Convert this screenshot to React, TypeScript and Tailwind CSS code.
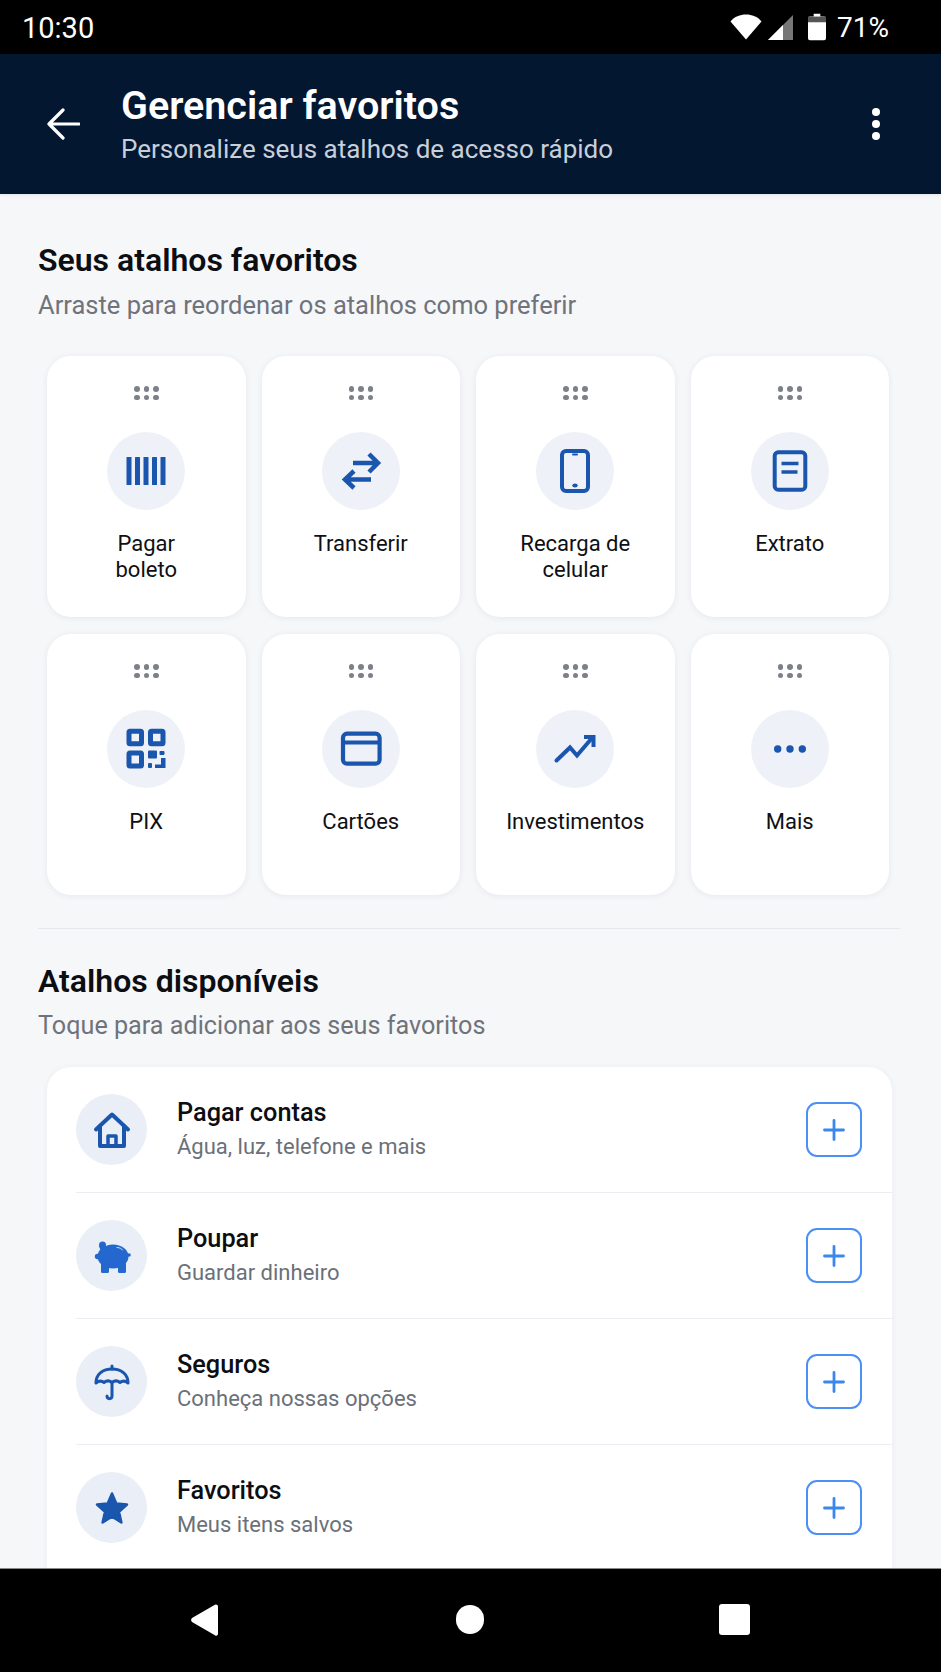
import type { ReactNode } from "react";

const Glyph = ({ children }: { children: ReactNode }) => (
  <svg viewBox="0 0 48 48" className="h-12 w-12 text-[#1a56ad]" fill="none" stroke="currentColor" strokeWidth="4" strokeLinecap="round" strokeLinejoin="round">
    {children}
  </svg>
);

const shortcuts = [
  {
    label: "Pagar\nboleto",
    icon: (
      <g fill="currentColor" stroke="none">
        <rect x="4.500" y="10" width="5" height="28" rx="0.500" />
        <rect x="13" y="10" width="5" height="28" rx="0.500" />
        <rect x="21.500" y="10" width="5" height="28" rx="0.500" />
        <rect x="30" y="10" width="5" height="28" rx="0.500" />
        <rect x="38.500" y="10" width="5" height="28" rx="0.500" />
      </g>
    ),
  },
  {
    label: "Transferir",
    icon: (
      <g strokeWidth="4.500" strokeLinecap="butt" strokeLinejoin="miter">
        <path d="M16 16h24M32 7l9 9-9 9" />
        <path d="M34 32.500H9M17 24l-9 8.500 9 8.500" />
      </g>
    ),
  },
  {
    label: "Recarga de\ncelular",
    icon: (
      <>
        <rect x="11" y="4" width="26" height="40" rx="4" />
        <path d="M22 7.500h4" strokeWidth="2" />
        <ellipse cx="24" cy="38.500" rx="2.700" ry="2" fill="currentColor" stroke="none" />
      </>
    ),
  },
  {
    label: "Extrato",
    icon: (
      <>
        <rect x="8.700" y="5.300" width="30.600" height="37.400" rx="3.500" />
        <path d="M15.500 16.500h17M15.500 25h16" strokeLinecap="butt" strokeWidth="3.500" />
      </>
    ),
  },
  {
    label: "PIX",
    icon: (
      <>
        <rect x="7" y="6.200" width="12.500" height="12.500" rx="1" strokeWidth="5" />
        <rect x="28.500" y="6.200" width="12.500" height="12.500" rx="1" strokeWidth="5" />
        <rect x="7" y="28" width="12.500" height="13" rx="1" strokeWidth="5" />
        <g fill="currentColor" stroke="none">
          <rect x="11.700" y="10.800" width="3" height="3" fill="#eef1f7" />
          <rect x="33.200" y="10.800" width="3" height="3" fill="#eef1f7" />
          <rect x="26" y="25.500" width="9" height="8" rx="1" />
          <rect x="37.500" y="26" width="5" height="4" rx="1" />
          <rect x="26" y="38" width="4" height="5" rx="1" />
          <path d="M39 33h4.500v10H33v-3.500h6z" />
        </g>
      </>
    ),
  },
  {
    label: "Cartões",
    icon: (
      <>
        <rect x="6" y="8.700" width="36.600" height="30" rx="4" strokeWidth="4.200" />
        <path d="M6 17.500h36" strokeLinecap="butt" strokeWidth="4.200" />
      </>
    ),
  },
  {
    label: "Investimentos",
    icon: (
      <g strokeWidth="4" strokeLinecap="round" strokeLinejoin="miter">
        <path d="M5.500 35.500 19 22.500l7 8 15-17.500" />
        <path d="M33 12h9.500v10" strokeLinecap="butt" />
      </g>
    ),
  },
  {
    label: "Mais",
    icon: (
      <g fill="currentColor" stroke="none">
        <circle cx="11.700" cy="24" r="3.700" />
        <circle cx="24" cy="24" r="3.700" />
        <circle cx="36.300" cy="24" r="3.700" />
      </g>
    ),
  },
];

const available = [
  {
    title: "Pagar contas",
    desc: "Água, luz, telefone e mais",
    icon: (
      <>
        <path d="M8 23.500 24 8.500l16 15" />
        <path d="M12 20v20h24V20" />
        <path d="M20 40V30h8v10" strokeWidth="3.500" />
      </>
    ),
  },
  {
    title: "Poupar",
    desc: "Guardar dinheiro",
    icon: (
      <g fill="#2468cf" stroke="none">
        <ellipse cx="25" cy="24.500" rx="15.500" ry="12" />
        <circle cx="14.500" cy="13" r="3.500" />
        <path d="M11 14l8 1-4 10z" />
        <rect x="13" y="30" width="8" height="11" rx="1.500" />
        <rect x="30" y="30" width="8" height="11" rx="1.500" />
        <circle cx="9.500" cy="24.500" r="2.700" />
        <circle cx="41" cy="23" r="1.800" />
        <path d="M29 15.500c2.500 0 4.500 1 5.500 2.500" stroke="#cfe0fa" strokeWidth="1" fill="none" />
      </g>
    ),
  },
  {
    title: "Seguros",
    desc: "Conheça nossas opções",
    icon: (
      <g strokeWidth="3">
        <path d="M8 25c0-9 7-14 16-14s16 5 16 14c-2.500-2-5.500-2.500-8-.5-2.500-2-5.500-2-8 0-2.500-2-5.500-2-8 0-2.500-2-5.500-1.500-8 .5z" />
        <path d="M24 8v3M24 25v13c0 3.500-5 3.500-5 0" />
      </g>
    ),
  },
  {
    title: "Favoritos",
    desc: "Meus itens salvos",
    icon: (
      <path d="M24 9.500 28.300 19.500 39 20.500 31 27.700 33.400 38.500 24 32.800 14.600 38.500 17 27.700 9 20.500 19.700 19.500z" fill="currentColor" strokeWidth="2.500" />
    ),
  },
];

const DragDots = () => (
  <div className="grid grid-cols-3 gap-x-1 gap-y-[3px]">
    {[0, 1, 2, 3, 4, 5].map((i) => (
      <span key={i} className="h-[5.500px] w-[5.500px] rounded-full bg-[#7c8088]" />
    ))}
  </div>
);

const ShortcutCard = ({ label, icon }: { label: string; icon: ReactNode }) => (
  <div className="flex h-[261px] flex-col items-center rounded-[24px] bg-white pt-[30px] shadow-[0_1px_6px_rgba(30,50,90,0.08)]">
    <DragDots />
    <div className="mt-[32px] flex h-[78px] w-[78px] items-center justify-center rounded-full bg-[#eef1f7]">
      <Glyph>{icon}</Glyph>
    </div>
    <p className="mt-[21px] whitespace-pre-line text-center text-[22px] font-[450] leading-[26px] text-[#0e1014]">{label}</p>
  </div>
);

const AvailableRow = ({ title, desc, icon, first }: { title: string; desc: string; icon: ReactNode; first: boolean }) => (
  <div className={first ? "ml-[29px]" : "ml-[29px] border-t border-[#ebedf2]"}>
    <div className="flex h-[125px] items-center pr-[30px]">
      <div className="flex h-[71px] w-[71px] flex-none items-center justify-center rounded-full bg-[#e9eef7]">
        <Glyph>{icon}</Glyph>
      </div>
      <div className="ml-[30px] flex-1">
        <p className="text-[25.300px] font-medium leading-[30px] text-[#0c0e12]">{title}</p>
        <p className="mt-1 text-[22px] leading-[30px] text-[#6b7079]">{desc}</p>
      </div>
      <button className="flex h-[55px] w-[56px] items-center justify-center rounded-[11px] border-2 border-[#4a90f5] text-[#3b87ee]">
        <svg viewBox="0 0 24 24" className="h-[24px] w-[24px]" fill="none" stroke="currentColor" strokeWidth="2.800" strokeLinecap="round">
          <path d="M12 2.500v19M2.500 12h19" />
        </svg>
      </button>
    </div>
  </div>
);

const App = () => {
  return (
    <div className="flex h-screen w-full flex-col overflow-hidden bg-[#f6f7f9] font-['Roboto',sans-serif]">
      {/* Status bar */}
      <div className="flex h-[54px] flex-none items-center bg-black pl-[22px] pr-[52px] text-white">
        <span className="pt-[2px] text-[29px] leading-none">10:30</span>
        <div className="ml-auto flex items-center">
          <svg viewBox="0 0 32 26" className="h-[26px] w-[32px]" fill="white">
            <path d="M16 25.500 0.500 7.500C4.500 2.500 10 0.500 16 0.500s11.500 2 15.500 7z" />
          </svg>
          <svg viewBox="0 0 25 26" className="ml-[6px] h-[26px] w-[25px]">
            <path d="M25 1 0 26h25z" fill="#777" />
            <path d="M15 11 0 26h15z" fill="white" />
          </svg>
          <svg viewBox="0 0 19 28" className="ml-[15px] h-[28px] w-[18px]">
            <path d="M6 0h7v3h4a2 2 0 0 1 2 2v21a2 2 0 0 1-2 2H2a2 2 0 0 1-2-2V5a2 2 0 0 1 2-2h4z" fill="white" />
            <rect x="0" y="3" width="19" height="6" fill="#555" />
          </svg>
          <span className="ml-[11px] pt-[2px] text-[28px] leading-none">71%</span>
        </div>
      </div>

      {/* Header */}
      <header className="flex h-[140px] flex-none items-center bg-[#041731] pl-[47px] pr-[61px] shadow-[0_1px_3px_rgba(0,0,0,0.08)]">
        <svg viewBox="0 0 33 32" className="h-8 w-[33px] flex-none" fill="none" stroke="white" strokeWidth="3.200" strokeLinecap="round" strokeLinejoin="round">
          <path d="M32 16H2M16 2 2 16l14 14" />
        </svg>
        <div className="ml-[41px] flex-1">
          <h1 className="text-[39.500px] font-semibold leading-[44px] text-white">Gerenciar favoritos</h1>
          <p className="mt-[6px] text-[26px] leading-[30px] text-[#c7cfdb]">Personalize seus atalhos de acesso rápido</p>
        </div>
        <div className="flex flex-col gap-[4px]">
          <span className="h-2 w-2 rounded-full bg-white" />
          <span className="h-2 w-2 rounded-full bg-white" />
          <span className="h-2 w-2 rounded-full bg-white" />
        </div>
      </header>

      <main className="min-h-0 flex-1 overflow-hidden pt-12">
        <section>
          <h2 className="pl-[38px] text-[32px] font-semibold leading-[36px] text-[#0c0e12]">Seus atalhos favoritos</h2>
          <p className="mt-3 pl-[38px] text-[25.500px] leading-[30px] text-[#6f737b]">Arraste para reordenar os atalhos como preferir</p>
          <div className="ml-[47px] mr-[52px] mt-9 grid grid-cols-4 gap-x-4 gap-y-[17px]">
            {shortcuts.map((s) => (
              <ShortcutCard key={s.label} label={s.label} icon={s.icon} />
            ))}
          </div>
        </section>

        <div className="ml-[38px] mr-[41px] mt-[33px] border-t border-[#e6e8ed]" />

        <section className="mt-[34px]">
          <h2 className="pl-[38px] text-[32px] font-semibold leading-[36px] text-[#0c0e12]">Atalhos disponíveis</h2>
          <p className="mt-3 pl-[38px] text-[25.200px] leading-[30px] text-[#6f737b]">Toque para adicionar aos seus favoritos</p>
          <div className="ml-[47px] mr-[49px] mt-[26px] rounded-t-[24px] bg-white pb-10 shadow-[0_1px_6px_rgba(30,50,90,0.06)]">
            {available.map((a, i) => (
              <AvailableRow key={a.title} title={a.title} desc={a.desc} icon={a.icon} first={i === 0} />
            ))}
          </div>
        </section>
      </main>

      {/* Android nav bar */}
      <div className="flex h-[104px] flex-none items-center justify-between border-t border-[#8a8a8a] bg-black px-[191px] pb-[2px]">
        <svg viewBox="0 0 27 32" className="h-8 w-[27px]" fill="white">
          <path d="M25 0.500a2 2 0 0 1 2 1.500v28a2 2 0 0 1-3.500 1L1 18a3 3 0 0 1 0-4L23.500 1a2 2 0 0 1 1.500-.5z" />
        </svg>
        <span className="ml-[2px] h-[29px] w-[28px] rounded-full bg-white" />
        <span className="h-[31px] w-[31px] rounded-[3px] bg-white" />
      </div>
    </div>
  );
};

export default App;
